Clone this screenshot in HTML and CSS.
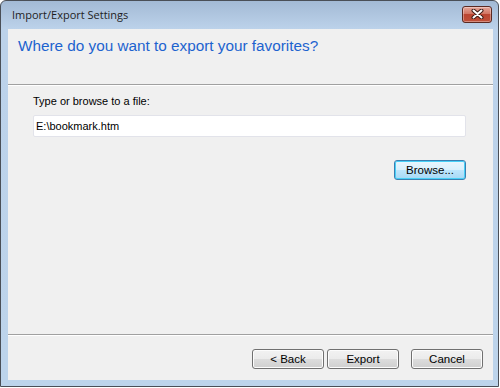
FILE: index.html
```html
<!DOCTYPE html>
<html lang="en">
<head>
    <meta charset="UTF-8">
    <title>Import/Export Settings</title>
    <link rel="stylesheet" href="styles.css">
</head>
<body>
    <div class="window">
        <div class="titlebar">
            <span class="title">Import/Export Settings</span>
            <button class="close" aria-label="Close">
                <svg width="13" height="10" viewBox="0 0 13 10">
                    <path d="M2.5 1.5 L10.5 8.5 M10.5 1.5 L2.5 8.5" stroke="#3a1a14" stroke-width="4" stroke-linecap="round"/>
                    <path d="M2.5 1.5 L10.5 8.5 M10.5 1.5 L2.5 8.5" stroke="#ffffff" stroke-width="2" stroke-linecap="round"/>
                </svg>
            </button>
        </div>
        <div class="client">
            <div class="header">
                <h1>Where do you want to export your favorites?</h1>
            </div>
            <div class="content">
                <label for="file">Type or browse to a file:</label>
                <input type="text" id="file" value="E:\bookmark.htm">
                <div class="browse-row">
                    <button class="btn default">Browse...</button>
                </div>
            </div>
            <div class="footer">
                <button class="btn">&lt; Back</button>
                <button class="btn">Export</button>
                <button class="btn cancel">Cancel</button>
            </div>
        </div>
    </div>
</body>
</html>
```

FILE: styles.css
```css
body {
    margin: 0;
    background: #ffffff;
    font-family: "Liberation Sans", Arial, sans-serif;
    font-size: 11px;
    color: #000;
}
.window {
    width: 499px;
    height: 387px;
    box-sizing: border-box;
    border: 1px solid #4a4f57;
    border-radius: 6px 6px 0 0;
    background: linear-gradient(#a3bad5, #bcd2ea 28px, #bdd4eb);
    padding: 0 5px 6px 7px;
    display: flex;
    flex-direction: column;
    box-shadow: 0 1px 0 #27c6e6;
}
.titlebar {
    height: 28px;
    display: flex;
    align-items: center;
    justify-content: space-between;
}
.title {
    font-family: "Open Sans", sans-serif;
    font-size: 11px;
    color: #1e1e1e;
    padding-left: 4px;
    margin-top: -1px;
}
.close {
    width: 30px;
    height: 17px;
    margin-top: -2px;
    margin-right: 1px;
    padding: 0;
    border: 1px solid #5b2a22;
    border-radius: 3px;
    background: linear-gradient(#e5a699, #d27563 45%, #bb4632 50%, #c0503a);
    box-shadow: inset 0 0 0 1px rgba(255,255,255,0.35);
    display: flex;
    align-items: center;
    justify-content: center;
}
.client {
    flex: 1;
    background: #f0f0f0;
    display: flex;
    flex-direction: column;
}
.header {
    height: 56px;
    padding: 7px 0 0 10px;
    box-sizing: border-box;
    border-bottom: 1px solid #a0a0a0;
    box-shadow: 0 1px 0 #ffffff;
}
h1 {
    margin: 0;
    font-size: 15.3px;
    font-weight: normal;
    color: #1d63cf;
    line-height: 19px;
}
.content {
    flex: 1;
    padding: 9px 27px 0 25px;
    display: flex;
    flex-direction: column;
}
label {
    display: block;
    line-height: 15px;
    margin-bottom: 6px;
}
input {
    height: 22px;
    box-sizing: border-box;
    border: 1px solid #e2e3ea;
    border-radius: 2px;
    padding: 0 2px;
    font-family: "Liberation Sans", Arial, sans-serif;
    font-size: 11px;
    background: #fff;
    outline: none;
}
.browse-row {
    display: flex;
    justify-content: flex-end;
    margin-top: 23px;
}
.btn {
    width: 72px;
    height: 20px;
    padding: 0;
    font-family: "Liberation Sans", Arial, sans-serif;
    font-size: 11.5px;
    color: #000;
    border: 1px solid #707070;
    border-radius: 3px;
    background: linear-gradient(#f2f2f2, #ebebeb 50%, #dddddd 50%, #cfcfcf);
    box-shadow: inset 0 0 0 1px #fcfcfc;
}
.btn.default {
    border-color: #3c7fb1;
    background: linear-gradient(#eaf6fd, #d9f0fc 50%, #bee6fd 50%, #a7d9f5);
    box-shadow: inset 0 0 0 1px #48d0f7;
}
.footer {
    height: 46px;
    box-sizing: border-box;
    border-top: 1px solid #a0a0a0;
    box-shadow: inset 0 1px 0 #ffffff;
    display: flex;
    align-items: flex-start;
    padding: 14px 10px 0 0;
    justify-content: flex-end;
    gap: 3px;
}
.footer .cancel {
    margin-left: 9px;
}
```
